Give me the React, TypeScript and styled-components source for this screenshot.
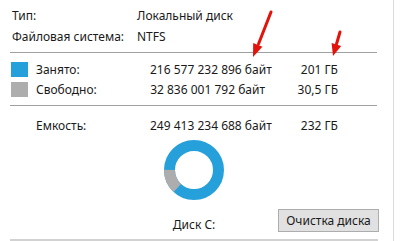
import styled, { createGlobalStyle } from "styled-components"

const Global = createGlobalStyle`
  html, body { margin: 0; padding: 0; background: #fff; }
  body { font-family: "Noto Sans", "Open Sans", sans-serif; color: #1a1a1a; }
`

const Page = styled.div`
  position: relative;
  width: 400px;
  height: 241px;
  overflow: hidden;
  background: #fff;
`

const Panel = styled.div`
  width: 394px;
  height: 241px;
  border-right: 1px solid #dadada;
  box-sizing: border-box;
  padding: 5px 16px 0 11px;
  display: flex;
  flex-direction: column;
`

const InfoRow = styled.div`
  display: grid;
  grid-template-columns: 125px 1fr;
  height: 21px;
  align-items: center;
  font-size: 12px;
  padding-left: 1px;
`

const Separator = styled.div<{ $top: number; $bottom: number }>`
  height: 1px;
  background: #a0a0a0;
  margin: ${(p) => p.$top}px 0 ${(p) => p.$bottom}px -1px;
`

const UsageRow = styled.div`
  display: grid;
  grid-template-columns: 25px 114px 115px 73px;
  height: 21px;
  align-items: center;
  font-size: 12px;
`

const Swatch = styled.span<{ $color: string }>`
  width: 17px;
  height: 15px;
  background: ${(p) => p.$color};
`

const Num = styled.span`
  text-align: right;
  white-space: nowrap;
`

const Chart = styled.div`
  display: flex;
  justify-content: center;
  width: 366px;
  margin-top: 3px;
  height: 62px;
`

const Footer = styled.div`
  display: flex;
  align-items: flex-end;
  height: 30px;
  margin-top: 3px;
  position: relative;
  width: 368px;
`

const DiskLabel = styled.span`
  font-size: 12px;
  width: 366px;
  text-align: center;
  line-height: 14px;
  margin-bottom: 2px;
`

const CleanButton = styled.button`
  position: absolute;
  right: 0;
  top: 5px;
  width: 101px;
  height: 23px;
  background: #e1e1e1;
  border: 1px solid #adadad;
  font-family: inherit;
  font-size: 12px;
  color: #1a1a1a;
  padding: 0;
`

const BottomLine = styled.div`
  margin-top: 5px;
  height: 2px;
  width: 368px;
  margin-left: -1px;
  background: #d2d2d2;
`

const Arrows = styled.svg`
  position: absolute;
  left: 0;
  top: 0;
  pointer-events: none;
`

function Donut() {
  const r = 24.5
  const c = 2 * Math.PI * r
  const gray = c * (47 / 360)
  return (
    <svg width="62" height="62" viewBox="0 0 62 62">
      <circle cx="31" cy="31" r={r} fill="none" stroke="#26a0da" strokeWidth="11" />
      <circle
        cx="31"
        cy="31"
        r={r}
        fill="none"
        stroke="#adadad"
        strokeWidth="11"
        strokeDasharray={`${gray} ${c}`}
        transform="rotate(133 31 31)"
      />
    </svg>
  )
}

export default function App() {
  return (
    <>
      <Global />
      <Page>
        <Panel>
          <InfoRow>
            <span>Тип:</span>
            <span>Локальный диск</span>
          </InfoRow>
          <InfoRow>
            <span>Файловая система:</span>
            <span>NTFS</span>
          </InfoRow>
          <Separator $top={5} $bottom={6} />
          <UsageRow>
            <Swatch $color="#26a0da" />
            <span>Занято:</span>
            <Num>216 577 232 896 байт</Num>
            <Num>201 ГБ</Num>
          </UsageRow>
          <UsageRow>
            <Swatch $color="#adadad" />
            <span>Свободно:</span>
            <Num>32 836 001 792 байт</Num>
            <Num>30,5 ГБ</Num>
          </UsageRow>
          <Separator $top={5} $bottom={9} />
          <UsageRow>
            <span />
            <span>Емкость:</span>
            <Num>249 413 234 688 байт</Num>
            <Num>232 ГБ</Num>
          </UsageRow>
          <Chart>
            <Donut />
          </Chart>
          <Footer>
            <DiskLabel>Диск C:</DiskLabel>
            <CleanButton>Очистка диска</CleanButton>
          </Footer>
          <BottomLine />
        </Panel>
        <Arrows width="400" height="241">
          <g stroke="#e3120b" strokeWidth="3" strokeLinecap="round">
            <line x1="271" y1="12" x2="258.5" y2="44" />
            <line x1="340" y1="32" x2="336.5" y2="44" />
          </g>
          <g fill="#e3120b">
            <polygon points="253,57 262.4,46.8 253.2,43" />
            <polygon points="333,56 341.2,45.9 331.6,43.1" />
          </g>
        </Arrows>
      </Page>
    </>
  )
}
